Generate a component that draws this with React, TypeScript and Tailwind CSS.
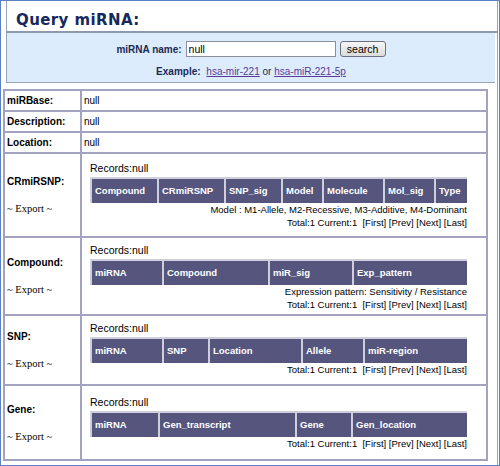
import React from 'react';

type Col = { label: string; w: string };

interface Section {
  name: string;
  pt: string;
  cols: Col[];
  notes: string[];
}

const sections: Section[] = [
  {
    name: 'CRmiRSNP:',
    pt: 'pt-[8px]',
    cols: [
      { label: 'Compound', w: 'w-[65px]' },
      { label: 'CRmiRSNP', w: 'w-[65px]' },
      { label: 'SNP_sig', w: 'w-[55px]' },
      { label: 'Model', w: 'w-[39px]' },
      { label: 'Molecule', w: 'w-[59px]' },
      { label: 'Mol_sig', w: 'w-[49px]' },
      { label: 'Type', w: 'w-[31px]' },
    ],
    notes: ['Model : M1-Allele, M2-Recessive, M3-Additive, M4-Dominant'],
  },
  {
    name: 'Compound:',
    pt: 'pt-[6px]',
    cols: [
      { label: 'miRNA', w: 'w-[70px]' },
      { label: 'Compound', w: 'w-[104px]' },
      { label: 'miR_sig', w: 'w-[82px]' },
      { label: 'Exp_pattern', w: 'w-[113px]' },
    ],
    notes: ['Expression pattern: Sensitivity / Resistance'],
  },
  {
    name: 'SNP:',
    pt: 'pt-[6px]',
    cols: [
      { label: 'miRNA', w: 'w-[70px]' },
      { label: 'SNP', w: 'w-[44px]' },
      { label: 'Location', w: 'w-[91px]' },
      { label: 'Allele', w: 'w-[60px]' },
      { label: 'miR-region', w: 'w-[102px]' },
    ],
    notes: [],
  },
  {
    name: 'Gene:',
    pt: 'pt-[10px]',
    cols: [
      { label: 'miRNA', w: 'w-[66px]' },
      { label: 'Gen_transcript', w: 'w-[135px]' },
      { label: 'Gene', w: 'w-[54px]' },
      { label: 'Gen_location', w: 'w-[114px]' },
    ],
    notes: [],
  },
];

function InfoRow({ label }: { label: string }) {
  return (
    <>
      <div className="bg-white flex items-center pl-[2px] text-[10px] font-bold text-black">{label}</div>
      <div className="bg-white flex items-center pl-[2px] text-[10px] text-black">null</div>
    </>
  );
}

function SectionRow({ s }: { s: Section }) {
  return (
    <>
      <div className="bg-white flex flex-col justify-center pl-[2px]">
        <div className="text-[10px] font-bold text-black leading-[13px]">{s.name}</div>
        <div className="mt-[14px] text-[10.5px] leading-[13px] text-black font-['Liberation_Serif',serif]">~ Export ~</div>
      </div>
      <div className={`bg-white pl-[8px] ${s.pt}`}>
        <div className="text-[10.5px] leading-[13px] text-black">Records:null</div>
        <div className="mt-[2px] flex w-[377px] h-[26px] bg-[#cfcfdb] pl-[2px] pt-[2px] gap-[2px]">
          {s.cols.map((c, i) => (
            <div key={i} className={`${c.w} bg-[#55557e] flex items-center pl-[3px] text-white font-bold text-[9.5px]`}>
              {c.label}
            </div>
          ))}
        </div>
        {s.notes.map((n, i) => (
          <div key={i} className="w-[377px] text-right text-[9.5px] leading-[13px] text-black">
            {n}
          </div>
        ))}
        <div className="w-[377px] text-right text-[9.5px] leading-[13px] text-black whitespace-pre">
          {'Total:1 Current:1  [First] [Prev] [Next] [Last]'}
        </div>
      </div>
    </>
  );
}

export default function App() {
  return (
    <div className="w-[500px] h-[466px] border border-[#5b80c4] bg-white overflow-hidden font-['Liberation_Sans',Arial,sans-serif]">
      <div className="w-[497px] h-full border-r border-[#9aa3b8]">
        <div className="ml-[5px] border-l border-[#9aa3b8]">
          <div className="h-[32px] border-b-2 border-[#8e98ad] flex items-center pl-[9px] pt-[8px]">
            <h1 className="font-['DejaVu_Sans',Verdana,sans-serif] font-bold text-[15px] leading-[18px] text-[#16295c] tracking-[0.4px]">
              Query miRNA:
            </h1>
          </div>
          <div className="mr-[2px] h-[50px] bg-[#dcecfd] border-b border-[#9aa3b8] pt-[8px] flex flex-col items-center">
            <div className="flex items-center gap-[4px]">
              <span className="text-[10px] font-bold text-[#1a2a55]">miRNA name:</span>
              <input
                readOnly
                value="null"
                className="w-[150px] h-[16px] bg-white border border-[#8a8f9a] px-[2px] text-[10.5px] text-black outline-none"
              />
              <button className="w-[46px] h-[16px] rounded-[3px] border border-[#6b7080] bg-gradient-to-b from-[#f6f6f6] to-[#dcdcdc] text-[10.5px] text-black leading-none">
                search
              </button>
            </div>
            <div className="mt-[8px] text-[10px] leading-[13px] text-[#1a2a55]">
              <span className="font-bold">Example:</span>{' '}
              <a className="underline text-[#5b3a99] ml-[3px]">hsa-mir-221</a>
              <span className="text-[#1a2a55]"> or </span>
              <a className="underline text-[#5b3a99]">hsa-miR-221-5p</a>
            </div>
          </div>
        </div>
        <div className="ml-[2px] mt-[6px] w-[485px] grid grid-cols-[75px_404px] grid-rows-[19px_19px_19px_82px_76px_68px_73px] gap-[2px] p-[2px] bg-[#a3a3c1]">
          <InfoRow label="miRBase:" />
          <InfoRow label="Description:" />
          <InfoRow label="Location:" />
          {sections.map((s) => (
            <SectionRow key={s.name} s={s} />
          ))}
        </div>
      </div>
    </div>
  );
}
